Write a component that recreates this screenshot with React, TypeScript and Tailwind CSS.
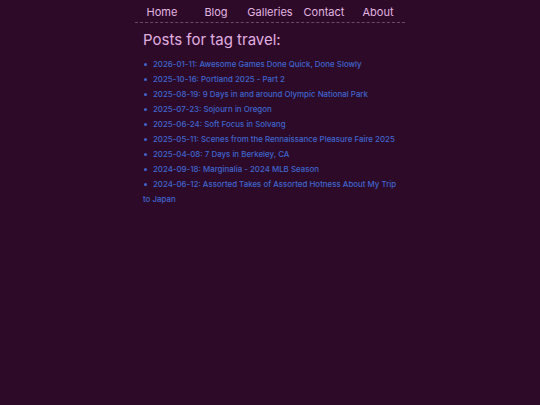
import React from "react";

const posts = [
  "2026-01-11: Awesome Games Done Quick, Done Slowly",
  "2025-10-16: Portland 2025 - Part 2",
  "2025-08-19: 9 Days in and around Olympic National Park",
  "2025-07-23: Sojourn in Oregon",
  "2025-06-24: Soft Focus in Solvang",
  "2025-05-11: Scenes from the Rennaissance Pleasure Faire 2025",
  "2025-04-08: 7 Days in Berkeley, CA",
  "2024-09-18: Marginalia - 2024 MLB Season",
  "2024-06-12: Assorted Takes of Assorted Hotness About My Trip to Japan",
];

export default function App() {
  return (
    <div className="min-h-[405px] w-full bg-[#2d0a28]" style={{ fontFamily: "Inter, 'Noto Sans', sans-serif" }}>
      <div className="mx-auto w-[270px]">
        <nav className="grid grid-cols-5 border-b border-dashed border-[#6a4a6a] pt-[5px] pb-[2px] text-[11px] leading-[15px] text-[#e2b4e0]">
          {["Home", "Blog", "Galleries", "Contact", "About"].map((n) => (
            <a key={n} className="text-center">{n}</a>
          ))}
        </nav>
        <div className="px-[8px]">
          <h1 className="mt-[6px] text-[15px] leading-[22px] text-[#e0aee0]">Posts for tag travel:</h1>
          <ul className="mt-[6px] text-[7.9px] font-medium leading-[15px] text-[#3f66cf]">
            {posts.map((p) => (
              <li key={p}>
                <span className="mr-[6px] ml-[1px] inline-block h-[3px] w-[3px] rounded-full bg-[#3f66cf] align-middle" />
                {p}
              </li>
            ))}
          </ul>
        </div>
      </div>
    </div>
  );
}
